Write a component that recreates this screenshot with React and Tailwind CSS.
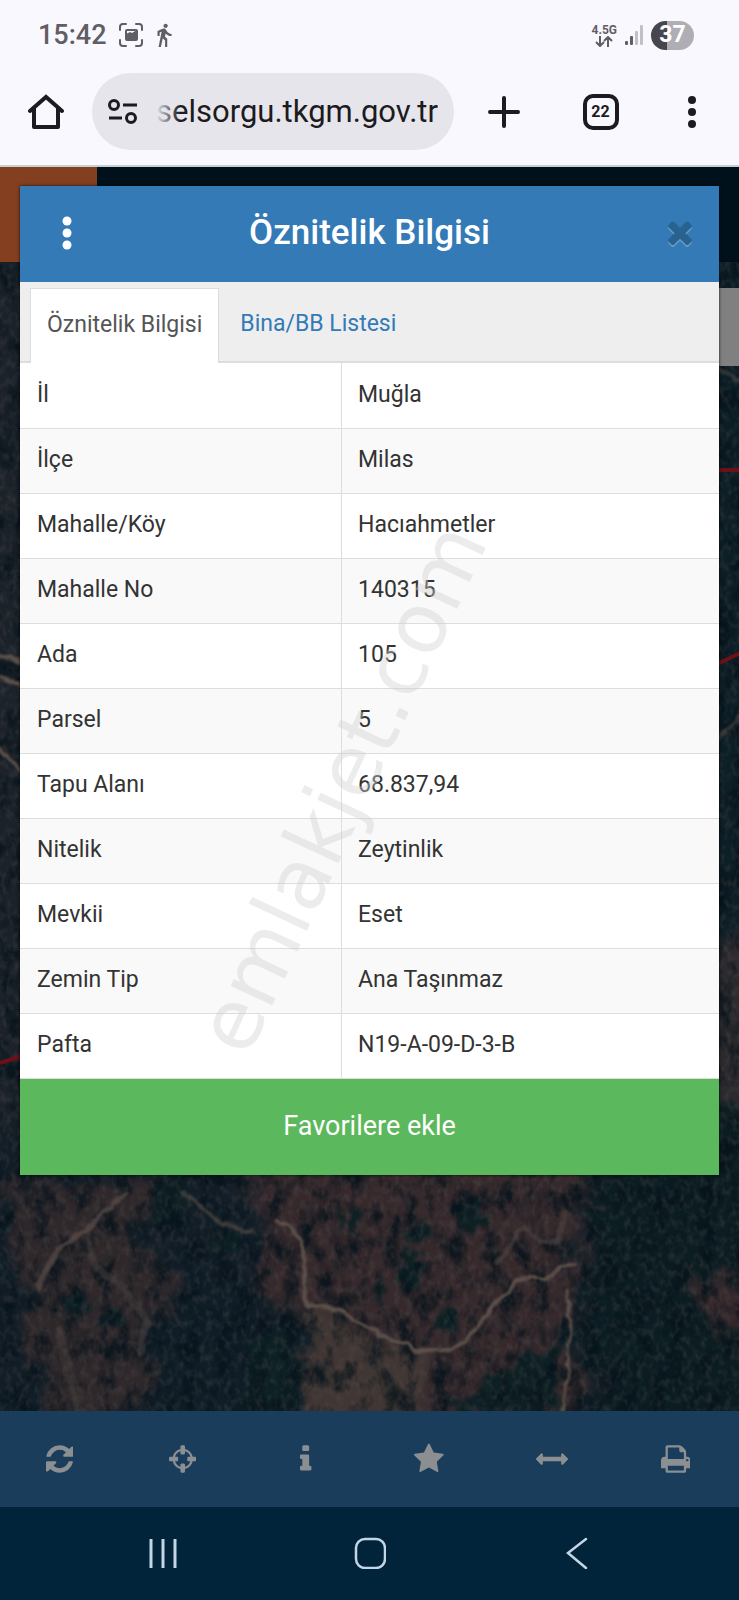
import { MdDirectionsWalk } from "react-icons/md"

const rows = [
  ["İl", "Muğla"],
  ["İlçe", "Milas"],
  ["Mahalle/Köy", "Hacıahmetler"],
  ["Mahalle No", "140315"],
  ["Ada", "105"],
  ["Parsel", "5"],
  ["Tapu Alanı", "68.837,94"],
  ["Nitelik", "Zeytinlik"],
  ["Mevkii", "Eset"],
  ["Zemin Tip", "Ana Taşınmaz"],
  ["Pafta", "N19-A-09-D-3-B"],
]

const tools = [
  {
    label: "Yenile",
    width: 1536,
    d: "M1511 1056q0 5-1 7-64 268-268 434.5t-478 166.5q-146 0-282.5-55t-243.5-157l-129 129q-19 19-45 19t-45-19-19-45v-448q0-26 19-45t45-19h448q26 0 45 19t19 45-19 45l-137 137q71 66 161 102t187 36q134 0 250-65t186-179q11-17 53-117 8-23 30-23h192q13 0 22.5 9.5t9.5 22.5zm25-800v448q0 26-19 45t-45 19h-448q-26 0-45-19t-19-45 19-45l138-138q-148-137-349-137-134 0-250 65t-186 179q-11 17-53 117-8 23-30 23h-199q-13 0-22.5-9.5t-9.5-22.5v-7q65-268 270-434.5t480-166.5q146 0 284 55.5t245 156.5l130-129q19-19 45-19t45 19 19 45z",
  },
  {
    label: "Konum",
    width: 1536,
    d: "M1197 1024h-109q-26 0-45-19t-19-45v-128q0-26 19-45t45-19h109q-32-108-112.5-188.5t-188.5-112.5v109q0 26-19 45t-45 19h-128q-26 0-45-19t-19-45v-109q-108 32-188.5 112.5t-112.5 188.5h109q26 0 45 19t19 45v128q0 26-19 45t-45 19h-109q32 108 112.5 188.5t188.5 112.5v-109q0-26 19-45t45-19h128q26 0 45 19t19 45v109q108-32 188.5-112.5t112.5-188.5zm339-192v128q0 26-19 45t-45 19h-143q-37 161-154.5 278.5t-278.5 154.5v143q0 26-19 45t-45 19h-128q-26 0-45-19t-19-45v-143q-161-37-278.5-154.5t-154.5-278.5h-143q-26 0-45-19t-19-45v-128q0-26 19-45t45-19h143q37-161 154.5-278.5t278.5-154.5v-143q0-26 19-45t45-19h128q26 0 45 19t19 45v143q161 37 278.5 154.5t154.5 278.5h143q26 0 45 19t19 45z",
  },
  {
    label: "Bilgi",
    width: 640,
    d: "M640 1344v128q0 26-19 45t-45 19h-512q-26 0-45-19t-19-45v-128q0-26 19-45t45-19h64v-384h-64q-26 0-45-19t-19-45v-128q0-26 19-45t45-19h384q26 0 45 19t19 45v576h64q26 0 45 19t19 45zm-128-1152v192q0 26-19 45t-45 19h-256q-26 0-45-19t-19-45v-192q0-26 19-45t45-19h256q26 0 45 19t19 45z",
  },
  {
    label: "Favoriler",
    width: 1664,
    d: "M1664 647q0 22-26 48l-363 354 86 500q1 7 1 20 0 21-10.5 35.5t-30.5 14.5q-19 0-40-12l-449-236-449 236q-22 12-40 12-21 0-31.5-14.5t-10.5-35.5q0-6 2-20l86-500-364-354q-25-27-25-48 0-37 56-46l502-73 225-455q19-41 49-41t49 41l225 455 502 73q56 9 56 46z",
  },
  {
    label: "Ölçüm",
    width: 1792,
    d: "M1792 896q0 26-19 45l-256 256q-19 19-45 19t-45-19-19-45v-128h-1024v128q0 26-19 45t-45 19-45-19l-256-256q-19-19-19-45t19-45l256-256q19-19 45-19t45 19 19 45v128h1024v-128q0-26 19-45t45-19 45 19l256 256q19 19 19 45z",
  },
  {
    label: "Yazdır",
    width: 1664,
    d: "M384 1536h896v-256h-896v256zm0-640h896v-384h-160q-40 0-68-28t-28-68v-160h-640v640zm1152 64q0-26-19-45t-45-19-45 19-19 45 19 45 45 19 45-19 19-45zm128 0v416q0 13-9.5 22.5t-22.5 9.5h-224v160q0 40-28 68t-68 28h-960q-40 0-68-28t-28-68v-160h-224q-13 0-22.5-9.5t-9.5-22.5v-416q0-79 56.5-135.5t135.5-56.5h64v-544q0-40 28-68t68-28h672q40 0 88 20t76 48l152 152q28 28 48 76t20 88v256h64q79 0 135.5 56.5t56.5 135.5z",
  },
]

function StatusBar() {
  return (
    <div className="flex h-[70px] items-center justify-between pl-[38px] pr-[45px] text-[#5f5e64]">
      <div className="flex items-center">
        <span className="text-[27px] font-medium">15:42</span>
        <svg className="ml-3 h-6 w-6" viewBox="0 0 24 24" fill="none" stroke="currentColor" strokeWidth="2">
          <path d="M1 7V4a3 3 0 0 1 3-3h3M17 1h3a3 3 0 0 1 3 3v3M23 17v3a3 3 0 0 1-3 3h-3M7 23H4a3 3 0 0 1-3-3v-3" strokeLinecap="round" />
          <rect x="6" y="6" width="13" height="12" rx="2" fill="currentColor" stroke="none" />
          <path d="M8 13v-2.500l3-1.500 2 1 4-2.500V8H8z" fill="#faf8ff" stroke="none" />
        </svg>
        <MdDirectionsWalk className="ml-2 h-[26px] w-[26px]" />
      </div>
      <div className="flex items-center">
        <div className="flex flex-col items-center">
          <span className="text-xs font-bold leading-3">4.5G</span>
          <svg className="h-[11px] w-[18px]" viewBox="0 0 18 11" fill="none" stroke="currentColor" strokeWidth="2">
            <path d="M5 0v10M1 6l4 4 4-4M13 11V1M9 5l4-4 4 4" />
          </svg>
        </div>
        <svg className="ml-[7px] h-5 w-5" viewBox="0 0 20 20">
          <rect x="1" y="16" width="3" height="4" rx="1" fill="#5f5e64" />
          <rect x="6" y="11" width="3" height="9" rx="1" fill="#5f5e64" />
          <rect x="11" y="6" width="3" height="14" rx="1" fill="#c2c0c7" />
          <rect x="16" y="0" width="3" height="20" rx="1" fill="#c2c0c7" />
        </svg>
        <div className="ml-[7px] flex h-[29px] w-[43px] items-center justify-center rounded-full bg-linear-to-r from-[#47464c] from-37% to-[#b0aeb5] to-37% text-[23px] font-bold text-white">
          37
        </div>
      </div>
    </div>
  )
}

function AddressBar() {
  return (
    <div className="flex h-[83px] items-center text-[#1b1b20]">
      <button aria-label="Ana sayfa" className="flex w-[92px] justify-center">
        <svg className="h-9 w-9" viewBox="0 0 36 36" fill="none" stroke="currentColor" strokeWidth="4" strokeLinecap="round" strokeLinejoin="round">
          <path d="M2 17 18 3l16 14" strokeLinejoin="miter" />
          <path d="M6 14v19h24V14" />
        </svg>
      </button>
      <div className="relative flex h-[77px] min-w-0 flex-1 items-center rounded-full bg-[#e7e5ec] pl-4 pr-4">
        <svg className="h-7 w-8 shrink-0" viewBox="0 0 32 28" fill="none" stroke="currentColor" strokeWidth="3">
          <circle cx="6" cy="7" r="4.500" />
          <path d="M15 7h14M1 20h13" />
          <circle cx="23" cy="20" r="4.500" />
        </svg>
        <div className="relative ml-4 min-w-0 flex-1">
          <input
            aria-label="Adres"
            readOnly
            value="selsorgu.tkgm.gov.tr"
            className="w-full bg-transparent pt-[2px] text-right text-[31px] outline-none"
          />
          <span className="pointer-events-none absolute inset-y-0 left-0 w-6 bg-linear-to-r from-[#e7e5ec] to-transparent" />
        </div>
      </div>
      <button aria-label="Yeni sekme" className="flex w-[97px] justify-center pl-[2px]">
        <svg className="h-8 w-8" viewBox="0 0 32 32" stroke="currentColor" strokeWidth="4" strokeLinecap="round">
          <path d="M16 2v28M2 16h28" />
        </svg>
      </button>
      <button aria-label="Sekmeler" className="flex w-[97px] justify-center pl-[2px]">
        <span className="flex h-9 w-9 items-center justify-center rounded-[10px] border-4 border-[#1b1b20] text-base font-bold">
          22
        </span>
      </button>
      <button aria-label="Menü" className="flex w-[91px] justify-center pr-1">
        <svg className="h-8 w-8" viewBox="0 0 32 32" fill="currentColor">
          <circle cx="16" cy="4" r="4" />
          <circle cx="16" cy="16" r="4" />
          <circle cx="16" cy="28" r="4" />
        </svg>
      </button>
    </div>
  )
}

function SatelliteMap() {
  return (
    <svg className="absolute inset-0 h-full w-full" viewBox="0 0 739 1149" preserveAspectRatio="none" aria-hidden="true">
      <defs>
        <filter id="soft" x="-30%" y="-30%" width="160%" height="160%" colorInterpolationFilters="sRGB">
          <feTurbulence type="fractalNoise" baseFrequency="0.02" numOctaves="4" seed="7" result="n" />
          <feGaussianBlur in="SourceGraphic" stdDeviation="8" result="b" />
          <feDisplacementMap in="b" in2="n" scale="90" xChannelSelector="R" yChannelSelector="G" />
        </filter>
        <filter id="rough" x="-30%" y="-30%" width="160%" height="160%" colorInterpolationFilters="sRGB">
          <feTurbulence type="fractalNoise" baseFrequency="0.05" numOctaves="3" seed="4" result="n" />
          <feDisplacementMap in="SourceGraphic" in2="n" scale="34" xChannelSelector="R" yChannelSelector="G" />
          <feGaussianBlur stdDeviation="2" />
        </filter>
        <filter id="trail" x="-20%" y="-20%" width="140%" height="140%" colorInterpolationFilters="sRGB">
          <feTurbulence type="fractalNoise" baseFrequency="0.08" numOctaves="2" seed="9" result="n" />
          <feDisplacementMap in="SourceGraphic" in2="n" scale="8" xChannelSelector="R" yChannelSelector="G" />
          <feGaussianBlur stdDeviation="1" />
        </filter>
        <filter id="shade" x="0" y="0" width="100%" height="100%" colorInterpolationFilters="sRGB">
          <feTurbulence type="fractalNoise" baseFrequency="0.06 0.04" numOctaves="4" seed="12" />
          <feColorMatrix values="0 0 0 0 0.02  0 0 0 0 0.07  0 0 0 0 0.1  3 0 0 0 -1.3" />
        </filter>
        <filter id="light" x="0" y="0" width="100%" height="100%" colorInterpolationFilters="sRGB">
          <feTurbulence type="fractalNoise" baseFrequency="0.16 0.12" numOctaves="2" seed="31" />
          <feColorMatrix values="0 0 0 0 0.36  0 0 0 0 0.33  0 0 0 0 0.33  0 2.4 0 0 -1.05" />
        </filter>
      </defs>
      <rect width="739" height="1149" fill="#121e27" />
      <g filter="url(#soft)">
        <rect x="-60" y="0" width="100" height="880" fill="#1b2229" />
        <rect x="690" y="0" width="120" height="700" fill="#0c1e26" />
        <path d="M700 720l45-60h60v250H700z" fill="#2c2a2d" />
        <path d="M250 880h320l10 130-10 200H300l10-140-40-60z" fill="#35292c" />
        <path d="M20 920h130l10 150-50 130H50L30 1060z" fill="#2f282b" />
        <path d="M300 1060h60l70 40-30 100H290z" fill="#403633" />
        <path d="M585 860h220v340H590z" fill="#0b1d22" />
        <path d="M160 1000l60 10 60 50-20 140H150z" fill="#0f1d27" />
        <path d="M685 1020l120-5v150z" fill="#36292c" />
      </g>
      <g filter="url(#rough)" fill="#0d2024">
        <ellipse cx="410" cy="1008" rx="11" ry="20" />
        <ellipse cx="445" cy="1058" rx="10" ry="16" />
        <ellipse cx="380" cy="1028" rx="7" ry="12" />
        <ellipse cx="470" cy="950" rx="14" ry="18" />
        <ellipse cx="425" cy="970" rx="12" ry="14" />
        <ellipse cx="348" cy="960" rx="9" ry="18" />
        <ellipse cx="230" cy="985" rx="18" ry="14" />
        <ellipse cx="75" cy="1038" rx="16" ry="10" />
        <ellipse cx="110" cy="1055" rx="16" ry="12" />
        <ellipse cx="170" cy="940" rx="20" ry="28" />
        <path d="M440 1149l60-40 50-30 15 70z" />
        <path d="M250 1080l50-10 0 80h-60z" />
      </g>
      <rect width="739" height="1149" filter="url(#shade)" opacity="0.8" />
      <rect width="739" height="1149" filter="url(#light)" opacity="0.3" />
      <g filter="url(#trail)" fill="none" stroke="#5c504a" strokeLinecap="round" strokeLinejoin="round">
        <path d="M278 958l14 7 12 20 2 56 33 7 38 23 38 17h37l24-20 19-27 28-26 24 3 14-13 14-2" strokeWidth="4" />
        <path d="M184 931l37 30 29 9" strokeWidth="4" opacity="0.6" />
        <path d="M125 931l-31 30-37 27-19 37" strokeWidth="5" opacity="0.7" />
        <path d="M88 970l6 34 28 20 26 36-8 30" strokeWidth="7" opacity="0.35" />
        <path d="M60 1070l8 40 14 40" strokeWidth="10" opacity="0.3" />
        <path d="M568 1028l2 43-2 40-6 40" strokeWidth="3" />
        <path d="M520 970l-22 30M565 950l-6 30-20 0-16-14" strokeWidth="5" opacity="0.4" />
        <path d="M0 393l22 7M0 416l22 7M0 487l22 23" strokeWidth="4" />
        <path d="M715 106l30 14M715 480l30-30" strokeWidth="4" opacity="0.5" />
      </g>
      <g fill="none" stroke="#6e1018" strokeWidth="4">
        <path d="M715 208h30M715 403l30-14M0 801l24-8" />
      </g>
    </svg>
  )
}

function AttributeDialog() {
  return (
    <section className="relative mx-5 mt-[19px] shadow-[0_0_3px_rgba(0,0,0,0.8)]">
      <header className="flex h-24 items-center bg-[#337ab7] text-white">
        <button aria-label="Seçenekler" className="flex w-[93px] justify-center pb-[2px]">
          <svg className="h-[34px] w-[34px]" viewBox="0 0 34 34" fill="currentColor">
            <circle cx="17" cy="5" r="4.500" />
            <circle cx="17" cy="17" r="4.500" />
            <circle cx="17" cy="29" r="4.500" />
          </svg>
        </button>
        <h1 className="flex-1 pb-[2px] text-center text-[35px] font-medium">Öznitelik Bilgisi</h1>
        <button aria-label="Kapat" className="flex w-[93px] justify-center pb-1 pl-[14px] text-[#29628f] drop-shadow-[0_2px_0_#669bc9]">
          <svg className="h-9 w-7" viewBox="0 0 1408 1792" fill="currentColor">
            <path d="M1298 1322q0 40-28 68l-136 136q-28 28-68 28t-68-28l-294-294-294 294q-28 28-68 28t-68-28l-136-136q-28-28-28-68t28-68l294-294-294-294q-28-28-28-68t28-68l136-136q28-28 68-28t68 28l294 294 294-294q28-28 68-28t68 28l136 136q28 28 28 68t-28 68l-294 294 294 294q28 28 28 68z" />
          </svg>
        </button>
      </header>

      <nav className="flex h-[81px] items-end border-b-2 border-[#dddddd] bg-[#eeeeee] pl-[10px] text-[23px]">
        <a href="#oznitelik" className="-mb-[2px] flex h-[75px] items-center border border-b-0 border-[#dddddd] bg-white px-4 pb-[2px] text-[#555555]">
          Öznitelik Bilgisi
        </a>
        <a href="#bina" className="flex h-[73px] items-center px-[21px] text-[#337ab7]">
          Bina/BB Listesi
        </a>
      </nav>

      <table className="w-full table-fixed border-collapse bg-white text-[23px] text-[#333333]">
        <tbody>
          {rows.map(([name, value]) => (
            <tr key={name} className="h-[65px] border-b border-[#dddddd] even:bg-[#f9f9f9]">
              <th scope="row" className="w-[46%] border-r border-[#dddddd] px-[17px] text-left font-normal">
                {name}
              </th>
              <td className="px-4">{value}</td>
            </tr>
          ))}
        </tbody>
      </table>

      <button className="h-24 w-full bg-[#5cb85c] text-[27px] text-white">Favorilere ekle</button>
    </section>
  )
}

function MapToolbar() {
  return (
    <div className="relative grid h-24 grid-cols-6 bg-[#1a3d5c] text-[#8c8f92]">
      {tools.map((tool) => (
        <button key={tool.label} aria-label={tool.label} className="flex items-center justify-center pr-1">
          <svg className="h-8" viewBox={`0 0 ${tool.width} 1792`} fill="currentColor">
            <path d={tool.d} />
          </svg>
        </button>
      ))}
    </div>
  )
}

function SystemNav() {
  return (
    <div className="grid h-[93px] grid-cols-3 bg-[#02243a] px-[59px] pb-[2px] text-[#c3d6e6]">
      <button aria-label="Son uygulamalar" className="flex items-center justify-center">
        <svg className="h-8 w-8" viewBox="0 0 32 32" stroke="currentColor" strokeWidth="3">
          <path d="M4 2v29M16 2v29M28 2v29" />
        </svg>
      </button>
      <button aria-label="Ana ekran" className="flex items-center justify-center">
        <svg className="h-8 w-8" viewBox="0 0 32 32" fill="none" stroke="currentColor" strokeWidth="2.500">
          <rect x="2" y="2" width="29" height="29" rx="9" />
        </svg>
      </button>
      <button aria-label="Geri" className="flex items-center justify-center">
        <svg className="h-8 w-8" viewBox="0 0 32 32" fill="none" stroke="currentColor" strokeWidth="2.500" strokeLinecap="round">
          <path d="M25 2 7 16l18 15" />
        </svg>
      </button>
    </div>
  )
}

export default function App() {
  return (
    <div className="relative flex min-h-screen flex-col overflow-hidden font-[Roboto,sans-serif]">
      <div className="h-[167px] border-b-2 border-[#c9cdd6] bg-[#faf8ff]">
        <StatusBar />
        <AddressBar />
      </div>

      <main className="relative flex-1 pb-8">
        <div className="absolute inset-0 flex flex-col">
          <div className="h-[95px] bg-[#00111b]">
            <div className="h-full w-[97px] bg-[#843f20]" />
          </div>
          <div className="relative flex-1">
            <SatelliteMap />
            <div className="absolute right-0 top-[26px] h-[78px] w-10 bg-[#808080]" />
          </div>
        </div>
        <AttributeDialog />
      </main>

      <MapToolbar />
      <SystemNav />

      <div className="pointer-events-none absolute inset-0 flex items-center justify-center pb-6 pr-14">
        <span className="-rotate-65 font-['DejaVu_Sans',sans-serif] text-[84px] leading-none text-[#d0d0d0]/40">
          emlakjet.com
        </span>
      </div>
    </div>
  )
}
